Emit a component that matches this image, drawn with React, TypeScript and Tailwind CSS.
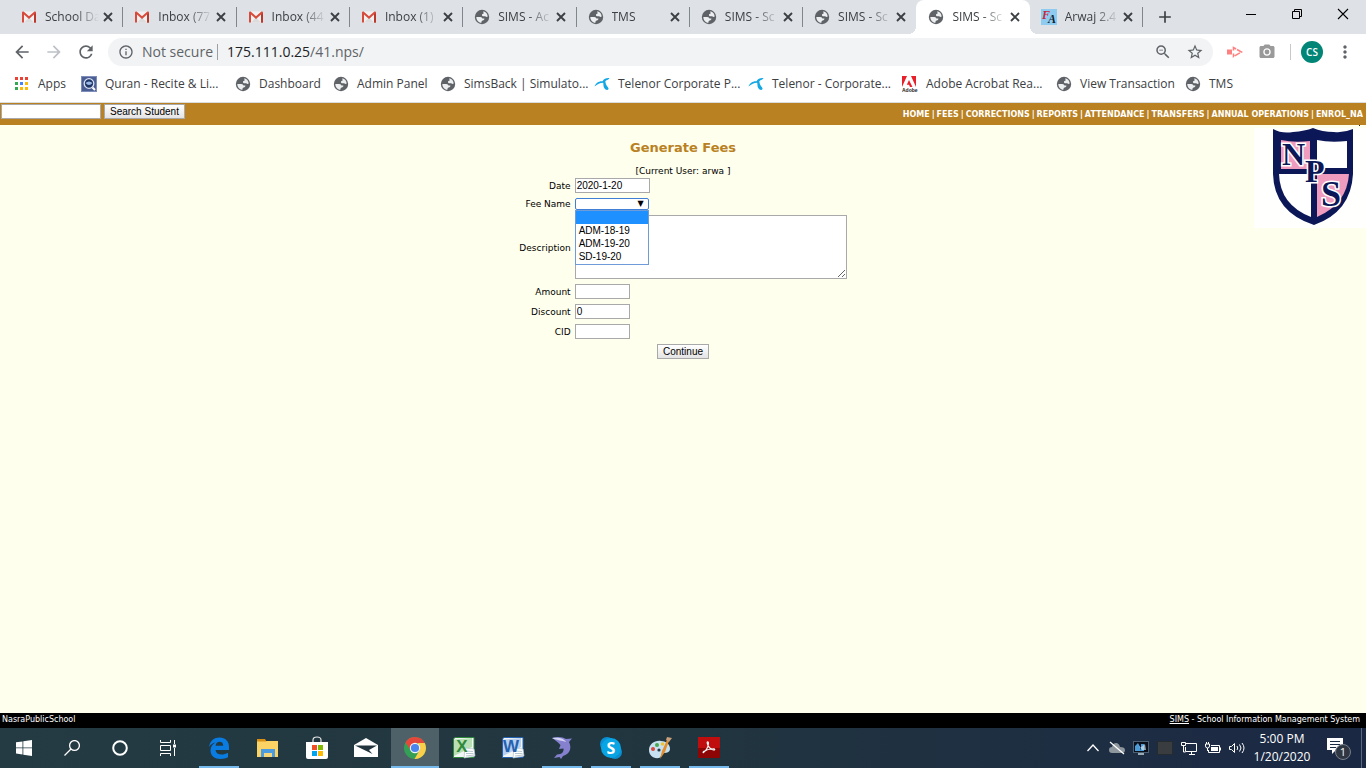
import React from "react";
import { MdPhotoCamera, MdInfoOutline, MdStarBorder, MdZoomOut, MdArrowBack, MdArrowForward, MdRefresh, MdMoreVert, MdAdd } from "react-icons/md";

function Gmail() {
  return (
    <svg viewBox="0 0 16 12" className="h-3 w-4 shrink-0">
      <rect x="1" y="0.5" width="14" height="11" rx="1" fill="#f1f1f1" />
      <path d="M3 11.5 8 6.5l5 5z" fill="#dcdcdc" />
      <path d="M1 11.5V1.5q0-1 1-1h.6L8 5.2 13.4.5h.6q1 0 1 1v10h-2V3.6L8 8 3 3.6v7.9z" fill="#d84a3b" />
      <path d="M13 3.6 15 2v9.5h-2z" fill="#b93a2d" />
    </svg>
  );
}

function Globe() {
  return (
    <svg viewBox="0 0 16 16" className="size-4 shrink-0">
      <circle cx="8" cy="8" r="7.2" fill="#5f6368" />
      <path d="M9.4 2.3c2.4.6 4.2 2.600 4.300 5.300-.6.5-1.500.4-2.100 0-.5-.4-1.100-.5-1.800-.4-1 .1-1.700-.3-1.800-1-.1-.8.3-1.200 1.100-1.400.6-.2.6-.7.4-1.100-.2-.5-.2-1-.1-1.400z" fill="#eceef0" />
      <path d="M2.300 7.900h3.900c1.400 0 2.100.8 2.200 1.700h2c.1 1.100-.6 1.800-1.700 1.900-.9.1-1.100.6-1.100 1.300 0 .4-.1.700-.3.9-2.800-.2-4.900-2.600-5-5.800z" fill="#eceef0" />
    </svg>
  );
}

function Arwaj() {
  return (
    <svg viewBox="0 0 16 16" className="size-4 shrink-0">
      <rect width="16" height="16" fill="#8ecbf0" />
      <text x="1" y="10" fontFamily="Liberation Serif, serif" fontSize="12" fontStyle="italic" fontWeight="700" fill="#c8283c">F</text>
      <text x="7" y="14" fontFamily="Liberation Serif, serif" fontSize="12" fontStyle="italic" fontWeight="700" fill="#10222e">A</text>
    </svg>
  );
}

function AppsGrid() {
  const colors = ["#ea4335", "#ea4335", "#ea4335", "#34a853", "#4285f4", "#fbbc05", "#34a853", "#fbbc05", "#fbbc05"];
  return (
    <svg viewBox="0 0 14 14" className="mx-px size-[14px] shrink-0" shapeRendering="crispEdges">
      {colors.map((c, i) => (
        <rect key={i} x={(i % 3) * 5} y={Math.floor(i / 3) * 5} width="3" height="3" fill={c} />
      ))}
    </svg>
  );
}

function Quran() {
  return (
    <svg viewBox="0 0 16 16" className="size-4 shrink-0">
      <rect width="16" height="16" rx="1" fill="#4c5f94" />
      <rect x=".5" y=".5" width="15" height="15" fill="none" stroke="#7d8cb8" />
      <circle cx="8" cy="7.500" r="4.800" fill="#1f3768" stroke="#d9e0f0" strokeWidth="1.300" />
      <path d="M4.500 7q3.500-3 7 0-3.500 4-7 0z" fill="#9dbae6" />
      <path d="m11.500 11.500 2.500 2.500" stroke="#fff" strokeWidth="2" />
    </svg>
  );
}

function Telenor() {
  return (
    <svg viewBox="0 0 16 16" className="size-4 shrink-0">
      <path d="M.5 10.500C1.500 7 5 4.800 8.500 5.200 9.800 3 12.500 1.800 15.500 2.200c-.5 1.200-2.800 1.600-4.200 3 .3 1.400.3 2.600 1.300 4.200.9 1.600 2.400 2.200 1.900 3.600-.6 1.600-3 1.400-4.300-.9-1.100-2.100-.5-4.100-1.100-5.400C6 7 3.500 8 .5 10.500z" fill="#13a8e4" />
    </svg>
  );
}

function AdobeMark() {
  return (
    <svg viewBox="0 0 16 16" className="size-4 shrink-0">
      <path d="M0 0h5L0 11zM9 0h5v11zM7 4l3.500 7H8L7 8.800H4.800z" fill="#e8202a" />
      <text x="0" y="16" fontFamily="Liberation Sans, sans-serif" fontSize="5" fontWeight="700" fill="#222">Adobe</text>
    </svg>
  );
}

type Tab = { title: string; icon: React.ReactNode; active?: boolean };
const tabs: Tab[] = [
  { title: "School Da", icon: <Gmail /> },
  { title: "Inbox (77", icon: <Gmail /> },
  { title: "Inbox (44", icon: <Gmail /> },
  { title: "Inbox (1)", icon: <Gmail /> },
  { title: "SIMS - Ac", icon: <Globe /> },
  { title: "TMS", icon: <Globe /> },
  { title: "SIMS - Sc", icon: <Globe /> },
  { title: "SIMS - Sc", icon: <Globe /> },
  { title: "SIMS - Sc", icon: <Globe />, active: true },
  { title: "Arwaj 2.4", icon: <Arwaj /> },
];

function TabStrip() {
  return (
    <div className="flex h-[34px] bg-[#dee1e6]">
      <div className="ml-[10px] grid w-[1133px] grid-cols-10">
        {tabs.map((t, i) => (
          <div
            key={i}
            className={
              t.active
                ? "relative flex items-center rounded-t-lg bg-white pl-3 before:absolute before:bottom-0 before:-left-2 before:size-2 before:bg-[radial-gradient(circle_at_0_0,transparent_8px,white_8px)] after:absolute after:-right-2 after:bottom-0 after:size-2 after:bg-[radial-gradient(circle_at_100%_0,transparent_8px,white_8px)]"
                : "relative flex items-center pl-[11px]"
            }
          >
            {t.icon}
            <span className="ml-2 w-[54px] overflow-hidden text-xs whitespace-nowrap text-[#3c4043] [mask-image:linear-gradient(to_right,black_55%,transparent)]">
              {t.title}
            </span>
            <button aria-label="Close tab" className="ml-1 text-[#3c4043]">
              <svg viewBox="0 0 10 10" className="size-[10px]"><path d="m1 1 8 8M9 1 1 9" stroke="currentColor" strokeWidth="1.900" /></svg>
            </button>
            {!t.active && i !== 7 && <span className="ml-auto h-5 w-px bg-[#80868b]" />}
          </div>
        ))}
      </div>
      <button aria-label="New tab" className="ml-3 text-[#3c4043]">
        <MdAdd className="size-5" />
      </button>
      <div className="ml-auto flex h-7 items-center gap-[34px] pr-[17px] text-black">
        <button aria-label="Minimize"><svg viewBox="0 0 12 12" className="size-3"><path d="M1 6.500h10" stroke="currentColor" /></svg></button>
        <button aria-label="Restore"><svg viewBox="0 0 12 12" className="size-3" fill="none" stroke="currentColor"><path d="M1.500 3.500h7v7h-7zM3.500 3.500v-2h7v7h-2" /></svg></button>
        <button aria-label="Close"><svg viewBox="0 0 12 12" className="size-3"><path d="m1 1 10 10M11 1 1 11" stroke="currentColor" strokeWidth="1.100" /></svg></button>
      </div>
    </div>
  );
}

function Toolbar() {
  return (
    <div className="flex h-9 items-center bg-white pl-3 text-[#5f6368]">
      <button aria-label="Back"><MdArrowBack className="size-5" /></button>
      <button aria-label="Forward" className="ml-3 text-[#bdc1c6]"><MdArrowForward className="size-5" /></button>
      <button aria-label="Reload" className="ml-3"><MdRefresh className="size-5" /></button>
      <div className="ml-3 flex h-7 flex-1 items-center rounded-full bg-[#f1f3f4] pr-[9px] pl-[10px] text-sm">
        <MdInfoOutline className="size-4 shrink-0" />
        <span className="ml-2">Not secure</span>
        <span className="ml-1 h-4 w-px bg-[#9aa0a6]" />
        <span className="ml-[9px]"><span className="text-[#202124]">175.111.0.25</span>/41.nps/</span>
        <button aria-label="Zoom" className="ml-auto"><MdZoomOut className="size-[18px]" /></button>
        <button aria-label="Bookmark this page" className="ml-[14px]"><MdStarBorder className="size-[18px]" /></button>
      </div>
      <button aria-label="Recorder" className="ml-[14px]">
        <svg viewBox="0 0 16 12" className="h-3 w-4" fill="none" stroke="#ff8080" strokeWidth="1.600"><path d="M0 3.500h5v5H0z" fill="#ff8080" stroke="none" /><path d="M6.500 4.500v-3L14.500 6l-8 4.500v-3" strokeDasharray="6 1" /></svg>
      </button>
      <button aria-label="Capture" className="ml-[15px] text-[#9a9a9a]"><MdPhotoCamera className="size-[18px]" /></button>
      <span className="ml-[14px] h-4 w-px bg-[#c6c9cc]" />
      <button className="ml-[10px] flex size-[22px] items-center justify-center rounded-full bg-[#008577] text-[10px] font-semibold text-white">CS</button>
      <button aria-label="Menu" className="mr-[11px] ml-3"><MdMoreVert className="size-5" /></button>
    </div>
  );
}

function Bookmark({ icon, children, className }: { icon: React.ReactNode; children: string; className: string }) {
  return (
    <a href="#" className={`flex items-center gap-2 whitespace-nowrap ${className}`}>
      {icon}
      <span>{children}</span>
    </a>
  );
}

function Bookmarks() {
  return (
    <nav className="flex h-[33px] items-center border-b border-[#dadce0] bg-white pb-1 pl-[14px] text-xs text-[#3c4043]">
      <Bookmark className="w-[67px]" icon={<AppsGrid />}>Apps</Bookmark>
      <Bookmark className="w-[154px]" icon={<Quran />}>Quran - Recite &amp; Li...</Bookmark>
      <Bookmark className="w-[98px]" icon={<Globe />}>Dashboard</Bookmark>
      <Bookmark className="w-[107px]" icon={<Globe />}>Admin Panel</Bookmark>
      <Bookmark className="w-[154px]" icon={<Globe />}>SimsBack | Simulato...</Bookmark>
      <Bookmark className="w-[154px]" icon={<Telenor />}>Telenor Corporate P...</Bookmark>
      <Bookmark className="w-[154px]" icon={<Telenor />}>Telenor - Corporate...</Bookmark>
      <Bookmark className="w-[154px]" icon={<AdobeMark />}>Adobe Acrobat Rea...</Bookmark>
      <Bookmark className="w-[129px]" icon={<Globe />}>View Transaction</Bookmark>
      <Bookmark className="w-[60px]" icon={<Globe />}>TMS</Bookmark>
    </nav>
  );
}

function Crest() {
  return (
    <svg viewBox="0 0 112 104" className="h-[104px] w-[112px]" role="img" aria-label="NPS">
      <rect y="3" width="112" height="100" fill="#fffffd" />
      <rect x="105" width="1" height="1" fill="#222" />
      <path d="M19 4q9 5 20 3 12-1 20-4 9 4 21 4 10 1 19-3v45q-2 38-39 51Q20 87 19 49z" fill="#0c1758" />
      <path d="M27 15q13 3 29 1v28H27z" fill="#f09cbe" />
      <path d="M63 15q13 3 30 1v27H63z" fill="#fff" />
      <path d="M25 49h32v43Q26 80 25 49z" fill="#fff" />
      <path d="M63 49h32q-2 30-32 43z" fill="#f09cbe" />
      <g fontFamily="Liberation Serif, serif" fontWeight="700" fill="#0c1758" stroke="#fff" strokeWidth="3" paintOrder="stroke">
        <text x="28" y="40" fontSize="32">N</text>
        <text x="51" y="57" fontSize="32">P</text>
        <text x="67" y="81" fontSize="36">S</text>
      </g>
    </svg>
  );
}

const menu = ["HOME", "FEES", "CORRECTIONS", "REPORTS", "ATTENDANCE", "TRANSFERS", "ANNUAL OPERATIONS", "ENROL_NA"];
const field = "h-[15px] border border-[#a9a9a9] bg-white px-px font-['Liberation_Sans',sans-serif] text-[10px] leading-none text-black";
const push = "h-[15px] border border-[#a9a9a9] bg-linear-to-b from-white to-[#e4e4e4] px-[5px] font-['Liberation_Sans',sans-serif] text-[10px] leading-none text-black";
const caption = "pt-px text-right leading-3";

function SimsPage() {
  return (
    <div className="flex flex-1 flex-col bg-[#ffffee] font-['DejaVu_Sans',sans-serif] text-[9px] text-black">
      <header className="flex h-[22px] items-start bg-[#b98121]">
        <form className="flex gap-[3px] pt-px pl-px" onSubmit={(e) => e.preventDefault()}>
          <input aria-label="Student" className={`${field} w-[100px]`} />
          <button className={push}>Search Student</button>
        </form>
        <nav className="mt-[5px] ml-auto flex gap-[2px] pr-[3px] text-[8px] leading-[14px] font-bold text-white">
          {menu.map((m, i) => (
            <React.Fragment key={m}>
              {i > 0 && <span>|</span>}
              <a href="#">{m}</a>
            </React.Fragment>
          ))}
        </nav>
      </header>
      <main className="relative flex flex-1 flex-col items-center pt-[13px]">
        <div className="absolute top-0 right-0"><Crest /></div>
        <h1 className="text-[13px] leading-5 font-bold text-[#b98121]">Generate Fees</h1>
        <p className="mt-[7px] leading-3">[Current User: arwa ]</p>
        <form className="mt-px flex flex-col items-center gap-[5px]" onSubmit={(e) => e.preventDefault()}>
          <div className="grid grid-cols-[auto_auto] items-center gap-x-1 gap-y-[5px]">
            <label htmlFor="date" className={caption}>Date</label>
            <input id="date" defaultValue="2020-1-20" className={`${field} w-[75px]`} />
            <label htmlFor="fee" className="text-right leading-3">Fee Name</label>
            <div className="relative h-3 w-[74px]">
              <select id="fee" className="block h-3 w-full appearance-none rounded-xs border border-[#3f7fd6] bg-white" />
              <span className="pointer-events-none absolute top-0 right-[5px] text-[8px] leading-3">▼</span>
              <ul role="listbox" aria-label="Fee Name" className="absolute top-3 left-0 z-10 h-[55px] w-full border border-[#6f9bd8] bg-white font-['Liberation_Sans',sans-serif] text-[10px] leading-[13px]">
                <li role="option" aria-selected="true" className="h-[13px] bg-[#1e90ff]" />
                <li role="option" aria-selected="false" className="px-[3px]">ADM-18-19</li>
                <li role="option" aria-selected="false" className="px-[3px]">ADM-19-20</li>
                <li role="option" aria-selected="false" className="px-[3px]">SD-19-20</li>
              </ul>
            </div>
            <label htmlFor="desc" className={caption}>Description</label>
            <textarea id="desc" className="block h-16 w-[272px] border border-[#a9a9a9] bg-white" />
            <label htmlFor="amount" className={caption}>Amount</label>
            <input id="amount" className={`${field} w-[55px]`} />
            <label htmlFor="discount" className={caption}>Discount</label>
            <input id="discount" defaultValue="0" className={`${field} w-[55px]`} />
            <label htmlFor="cid" className={caption}>CID</label>
            <input id="cid" className={`${field} w-[55px]`} />
          </div>
          <button className={push}>Continue</button>
        </form>
      </main>
      <footer className="flex h-[15px] justify-between bg-black pr-[6px] pl-[2px] text-[8px] leading-[14px] text-white">
        <span>NasraPublicSchool</span>
        <span><a href="#" className="underline">SIMS</a> - School Information Management System</span>
      </footer>
    </div>
  );
}

const big = "size-6";
function Edge() {
  return <svg viewBox="0 0 24 24" className={big}><path d="M2 11C3 4.500 7.500 1.500 12.500 1.500 18.500 1.500 22 5.500 22 10.500V14H8.500c.3 3 2.800 4.500 6 4.500 2.300 0 4.500-.6 6.500-1.800v4.600c-2 1.100-4.600 1.700-7.200 1.700C7.500 23 3.500 19.500 3.500 14.500c0-3.500 1.800-6.300 5-8C5.800 6.800 3.500 8.500 2 11zm6.600-1.300h7.600c0-2.500-1.200-4-3.600-4-2.200 0-3.700 1.600-4 4z" fill="#0a7be0" /></svg>;
}
function Explorer() {
  return <svg viewBox="0 0 24 24" className={big}><path d="M1 5h21v16H1z" fill="#fbd364" /><path d="M1 3h8l1.500 2.500H1z" fill="#d98f12" /><path d="M5 13h14v8h-3v-4H8v4H5z" fill="#4a9be0" /><path d="M8 17h8v4H8z" fill="#f6d67a" /></svg>;
}
function Store() {
  return <svg viewBox="0 0 24 24" className={big}><path d="M8 6V4q0-3 4-3t4 3v2" fill="none" stroke="#e8e8e8" strokeWidth="1.200" /><path d="M1 6h22v15q0 2-2 2H3q-2 0-2-2z" fill="#fff" /><path d="M7 9h5v5H7z" fill="#f25022" /><path d="M13 9h5v5h-5z" fill="#7fba00" /><path d="M7 15h5v5H7z" fill="#00a4ef" /><path d="M13 15h5v5h-5z" fill="#ffb900" /></svg>;
}
function Mail() {
  return <svg viewBox="0 0 24 24" className={big}><path d="M0 9 12 2l12 7v12H0z" fill="#fff" /><path d="M1 9.500h22l-8 4.500 3.500 4z" fill="#22353f" /></svg>;
}
function Chrome() {
  return <svg viewBox="0 0 24 24" className={big}><circle cx="12" cy="12" r="11" fill="#34a056" /><path d="M2.500 6.500A11 11 0 0 1 21.800 7H12l-4.500 7z" fill="#e5483b" /><path d="M21.800 7A11 11 0 0 1 11.500 23L17 13.500 15 7z" fill="#fccf4a" /><circle cx="12" cy="12" r="5.200" fill="#f4f4f4" /><circle cx="12" cy="12" r="4.100" fill="#4a86ee" /></svg>;
}
function Office({ letter, color, tint }: { letter: string; color: string; tint: string }) {
  return (
    <svg viewBox="0 0 24 24" className={big}>
      <path d="M3 1.500h19v20H1.500V3z" fill="#f2f7f5" stroke={color} />
      <path d="M2 3.500 20 2v9L2 20z" fill={tint} />
      <path d="m13 12 9 1 1 7-11 2z" fill="#fff" stroke="#b4c4ce" strokeWidth=".7" />
      <path d="m14 15 7 .5M14 17.500h7.500M14 20l8-1" stroke="#a8b8c0" strokeWidth=".8" />
      <text x="10" y="16" textAnchor="middle" fontFamily="Liberation Sans, sans-serif" fontWeight="700" fontSize="17" fill={color}>{letter}</text>
    </svg>
  );
}
function Dolphin() {
  return <svg viewBox="0 0 24 24" className={big}><path d="M2 2C8 0 13 1 16 3l6-.5-3 3.500c3 6 1 12-6 14l-2 3-1.500-2L4 22l3-3.500c5 0 7-3 6.500-6L9 13l1.500-4C8 6 5 4 2 2z" fill="#8581cf" /><path d="M2 2c6-1 12 0 14 4-4-2-8-1-14-4z" fill="#d5d5f3" /></svg>;
}
function Skype() {
  return <svg viewBox="0 0 24 24" className={big}><circle cx="8" cy="8" r="7" fill="#0b8ed0" /><circle cx="16" cy="16" r="7" fill="#0b8ed0" /><circle cx="12" cy="12" r="10" fill="#08a4e4" /><text x="12" y="17.500" textAnchor="middle" fontFamily="Open Sans, sans-serif" fontWeight="700" fontSize="16" fill="#fff">S</text></svg>;
}
function Paint() {
  return <svg viewBox="0 0 24 24" className={big}><path d="M1 14C1 8 7 4 13 5c6 0 9 4 9 8s-5 4-7 4-1 4-4 5C5 23 1 19 1 14z" fill="#c6e1f1" /><circle cx="5" cy="13" r="2" fill="#d9473c" /><circle cx="9" cy="9" r="2" fill="#49a84f" /><circle cx="14.500" cy="8" r="1.800" fill="#eec232" /><circle cx="11" cy="14" r="1.600" fill="#253a46" /><path d="m12 23 2-8 5-11 2 1-4 11z" fill="#e38d2c" /><path d="m18 4 1-3 5 1-3 4z" fill="#c9a078" /></svg>;
}
function Reader() {
  return <svg viewBox="0 0 24 24" className={big}><path d="M1 1h22v21H1z" fill="#c00d0d" /><path d="M1 12h22v10H1z" fill="#8e0505" /><path d="M6.500 16.500c2.500-1.500 5-6 5-9.500 0-1.700-1.700-1.700-1.300 0 .8 3.500 3.500 6.500 6.300 7 1.700.3 1.700-1.300 0-1.300-3.500 0-7 1-9.500 2.500-1.400 1-1 1.700-.5 1.300z" fill="none" stroke="#fff" strokeWidth="1.100" /></svg>;
}

const apps = [
  { name: "Edge", icon: <Edge />, open: true },
  { name: "File Explorer", icon: <Explorer /> },
  { name: "Store", icon: <Store /> },
  { name: "Mail", icon: <Mail /> },
  { name: "Chrome", icon: <Chrome />, open: true, active: true },
  { name: "Excel", icon: <Office letter="X" color="#2f8a3c" tint="#b9dfb4" /> },
  { name: "Word", icon: <Office letter="W" color="#2461b0" tint="#b8d0ee" /> },
  { name: "Workbench", icon: <Dolphin />, open: true },
  { name: "Skype", icon: <Skype />, open: true },
  { name: "Paint", icon: <Paint />, open: true },
  { name: "Acrobat Reader", icon: <Reader />, open: true },
];

function Taskbar() {
  return (
    <div className="flex h-10 bg-linear-to-r from-[#243b43] via-[#21353f] to-[#1b2844] text-white">
      <div className="flex w-[194px]">
        <button aria-label="Start" className="flex w-12 items-center justify-center">
          <svg viewBox="0 0 16 16" className="size-4" fill="#fff"><path d="M0 2.300 6.500 1.400v6.100H0zM7.300 1.300 16 0v7.500H7.300zM0 8.300h6.500v6.200L0 13.600zM7.300 8.300H16V16l-8.700-1.300z" /></svg>
        </button>
        <button aria-label="Search" className="flex w-12 items-center justify-center">
          <svg viewBox="0 0 16 16" className="size-4" fill="none" stroke="#fff" strokeWidth="1.300"><circle cx="10.500" cy="5.500" r="4.900" /><path d="M7 9 .5 15.500" /></svg>
        </button>
        <button aria-label="Cortana" className="flex w-12 items-center justify-center">
          <svg viewBox="0 0 16 16" className="size-4" fill="none" stroke="#fff" strokeWidth="2"><circle cx="8" cy="8" r="6.800" /></svg>
        </button>
        <button aria-label="Task view" className="flex w-12 items-center justify-center">
          <svg viewBox="0 0 16 16" className="size-4" fill="none" stroke="#fff"><path d="M.5 0v2.500h10V0M.5 16v-2.500h10V16M.5 5.500h10v5H.5zM14.500 0v4M14.500 8v8" /><path d="M13 4.500h3v3h-3z" fill="#fff" stroke="none" /></svg>
        </button>
      </div>
      {apps.map((a) => (
        <button key={a.name} aria-label={a.name} className={a.active ? "ml-px flex w-12 flex-col items-center justify-between bg-[#4f6168]" : "flex w-[49px] flex-col items-center justify-between"}>
          <span className="pt-2">{a.icon}</span>
          {a.open && <span className={a.active ? "h-[2px] w-full bg-[#76b9ed]" : "h-[2px] w-10 bg-[#76b9ed]"} />}
        </button>
      ))}
      <div className="ml-auto flex items-center pr-1">
        <svg viewBox="0 0 12 8" className="h-2 w-3" fill="none" stroke="#fff" strokeWidth="1.300"><path d="m.5 7 5.500-6 5.500 6" /></svg>
        <svg viewBox="0 0 16 14" className="ml-[10px] h-[14px] w-4"><path d="M3 12q-3 0-3-3t3-3q1-4 4-4t4 4q5 0 5 3t-3 3z" fill="#8d959d" /><path d="m1 1 14 12" stroke="#fff" strokeWidth="1.200" /></svg>
        <svg viewBox="0 0 16 14" className="ml-2 h-[14px] w-4"><rect x=".5" y=".5" width="15" height="11" fill="#0a0f1a" stroke="#4d6073" /><path d="M2 10V5l3-3 2 4 1 4zM8 3h3v7H8z" fill="#4a9bd8" /><path d="m5 3 2 4 5-4 1 6H9z" fill="#cfe6f6" opacity=".7" /><path d="M5 12h6v2H5z" fill="#9ba9b5" /></svg>
        <span className="ml-2 h-[14px] w-4 border border-[#262b30] bg-[#3a3d40]" />
        <svg viewBox="0 0 16 14" className="ml-2 h-[14px] w-4" fill="none" stroke="#fff"><path d="M5 2.500h10.500v8H4.500V6M8 13.500h6M10.500 11v2M.5 1.500h4v3h-4zM2.500 5v6h2" /></svg>
        <svg viewBox="0 0 16 14" className="ml-2 h-[14px] w-4" fill="none" stroke="#fff"><path d="M6 4.500h8.500v7h-11V9M15.500 6.500v3M.5 3v2q0 2 2 2t2-2V3zM1.500 1v2M3.500 1v2M2.500 7v3" /><path d="M6 6h7v4H6z" fill="#fff" stroke="none" /></svg>
        <svg viewBox="0 0 16 14" className="ml-2 h-[14px] w-4" fill="none" stroke="#fff"><path d="M.5 5.500h2l3-3v9l-3-3h-2zM8 5q1.500 2 0 4M10.500 3.500q3 3.500 0 7M13 2q4 5 0 10" /></svg>
        <div className="ml-2 w-[58px] text-center text-xs leading-[18px] whitespace-nowrap">
          <div>5:00 PM</div>
          <div>1/20/2020</div>
        </div>
        <button aria-label="Notifications" className="ml-4 w-6">
          <svg viewBox="0 0 24 24" className="size-6"><path d="M0 2h16v12H9l-4 4v-4H0z" fill="#fff" /><path d="M3 5.500h10M3 8.500h10M3 11.500h6" stroke="#1d2b40" /><circle cx="16" cy="16" r="7.500" fill="#2e3742" stroke="#77808a" /><text x="16" y="20" textAnchor="middle" fontFamily="Open Sans, sans-serif" fontSize="11" fill="#fff">1</text></svg>
        </button>
        <span className="ml-[10px] h-10 w-px bg-[#5c6880]" />
      </div>
    </div>
  );
}

export default function App() {
  return (
    <div className="flex min-h-screen flex-col font-['Open_Sans','Noto_Sans',sans-serif]">
      <TabStrip />
      <Toolbar />
      <Bookmarks />
      <SimsPage />
      <Taskbar />
    </div>
  );
}
